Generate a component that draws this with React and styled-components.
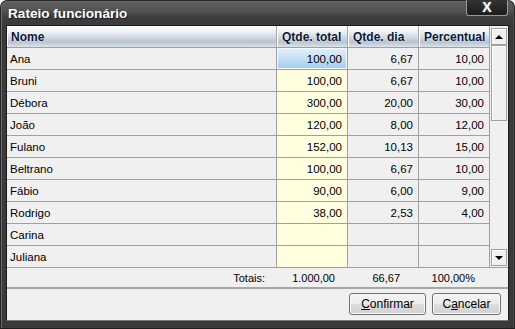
import styled, { createGlobalStyle } from "styled-components";

const GlobalStyle = createGlobalStyle`
  html, body { margin: 0; padding: 0; background: #ffffff; }
  body { font-family: "Liberation Sans", Arial, sans-serif; }
`;

const COLS = "270px 71px 71px 71px";

const rows = [
  { nome: "Ana", total: "100,00", dia: "6,67", perc: "10,00", selected: true },
  { nome: "Bruni", total: "100,00", dia: "6,67", perc: "10,00" },
  { nome: "Débora", total: "300,00", dia: "20,00", perc: "30,00" },
  { nome: "João", total: "120,00", dia: "8,00", perc: "12,00" },
  { nome: "Fulano", total: "152,00", dia: "10,13", perc: "15,00" },
  { nome: "Beltrano", total: "100,00", dia: "6,67", perc: "10,00" },
  { nome: "Fábio", total: "90,00", dia: "6,00", perc: "9,00" },
  { nome: "Rodrigo", total: "38,00", dia: "2,53", perc: "4,00" },
  { nome: "Carina", total: "", dia: "", perc: "" },
  { nome: "Juliana", total: "", dia: "", perc: "" },
];

const Window = styled.div`
  width: 515px;
  height: 329px;
  box-sizing: border-box;
  display: flex;
  flex-direction: column;
  padding: 0 5px 7px 5px;
  border: 1px solid #262626;
  border-bottom-color: #1e1e1e;
  border-radius: 7px 7px 0 0;
  background: linear-gradient(
    #606060 0px,
    #525252 10px,
    #3e3e3e 16px,
    #3a3a3a 24px,
    #3a3a3a 100%
  );
  box-shadow: inset 1px 1px 0 #6a6a6a, inset -1px 0 0 #4a4a4a;
`;

const TitleBar = styled.div`
  height: 24px;
  display: flex;
  align-items: flex-start;
  justify-content: space-between;
`;

const Title = styled.span`
  margin: 5px 0 0 2px;
  font: bold 13.6px/16px "Liberation Sans", Arial, sans-serif;
  color: #ffffff;
  text-shadow: 1px 1px 1px #1a1a1a;
`;

const CloseButton = styled.div`
  width: 40px;
  height: 15px;
  margin: -1px 1px 0 0;
  display: flex;
  align-items: center;
  justify-content: center;
  border: 1px solid #9a9a9a;
  border-top: none;
  border-radius: 0 0 3px 3px;
  background: linear-gradient(#333333, #1c1c1c);
  color: #ffffff;
  font: bold 14px/15px "Liberation Sans", Arial, sans-serif;
  text-shadow: 0 0 2px #888888;
`;

const Panel = styled.div`
  flex: 1;
  display: flex;
  flex-direction: column;
  background: #f0f0f0;
  border: 1px solid #1c1c1c;
  border-bottom-color: #7a7a7a;
`;

const Grid = styled.div`
  display: flex;
`;

const TableCol = styled.div`
  width: 483px;
  display: flex;
  flex-direction: column;
`;

const HeaderRow = styled.div`
  display: grid;
  grid-template-columns: ${COLS};
  height: 22px;
`;

const HeaderCell = styled.div`
  display: flex;
  align-items: center;
  padding-left: ${(p) => (p.first ? "4px" : "5px")};
  border-right: 1px solid #a8a8a8;
  border-bottom: 1px solid #a0a0a0;
  background: linear-gradient(
    #fcfdfd 0%,
    #edf0f3 28%,
    #d3dbe3 52%,
    #b7c3cf 76%,
    #dde3e9 100%
  );
  box-shadow: inset 1px 0 0 #ffffff;
  font: bold 12px "Liberation Sans", Arial, sans-serif;
  color: #0b1838;
  text-shadow: 0 0 2px #ffffff;
`;

const Row = styled.div`
  display: grid;
  grid-template-columns: ${COLS};
  height: 22px;
`;

const Cell = styled.div`
  display: flex;
  align-items: center;
  justify-content: ${(p) => (p.right ? "flex-end" : "flex-start")};
  padding: ${(p) => (p.right ? "0 5px 0 0" : "0 0 0 3px")};
  border-right: 1px solid #a0a0a0;
  border-bottom: 1px solid #a0a0a0;
  background: ${(p) =>
    p.selected
      ? "linear-gradient(#e2f0fb, #c4e0f6 50%, #a2cdef)"
      : p.yellow
      ? "#ffffe0"
      : "#f0f0f0"};
  box-shadow: ${(p) => (p.selected ? "inset 0 0 0 1px #f4faff" : "none")};
  font: 11.5px "Liberation Sans", Arial, sans-serif;
  color: #000000;
`;

const ScrollBar = styled.div`
  width: 18px;
  box-sizing: border-box;
  display: flex;
  flex-direction: column;
  padding: 2px 1px 1px 1px;
  border-bottom: 1px solid #a0a0a0;
  background: #f0f0f0;
`;

const ArrowButton = styled.div`
  height: 17px;
  box-sizing: border-box;
  display: flex;
  align-items: center;
  justify-content: center;
  border: 1px solid #a0a0a0;
  box-shadow: inset 1px 1px 0 #ffffff;
  background: #f0f0f0;
`;

const Triangle = styled.span`
  width: 0;
  height: 0;
  border-left: 4px solid transparent;
  border-right: 4px solid transparent;
  ${(p) =>
    p.down
      ? "border-top: 4px solid #000000;"
      : "border-bottom: 4px solid #000000;"}
`;

const Thumb = styled.div`
  height: 76px;
  box-sizing: border-box;
  border: 1px solid #a0a0a0;
  box-shadow: inset 1px 1px 0 #ffffff;
  background: #f0f0f0;
`;

const Track = styled.div`
  flex: 1;
`;

const TotalsRow = styled.div`
  display: grid;
  grid-template-columns: ${COLS};
  height: 19px;
`;

const TotalCell = styled.div`
  display: flex;
  align-items: center;
  justify-content: flex-end;
  padding-right: ${(p) => p.pad}px;
  font: 11px "Liberation Sans", Arial, sans-serif;
  color: #000000;
`;

const Separator = styled.div`
  height: 2px;
  background: #a6a6a6;
`;

const ButtonRow = styled.div`
  display: flex;
  justify-content: flex-end;
  gap: 6px;
  padding: 4px 7px 0 0;
`;

const Button = styled.button`
  width: ${(p) => p.w}px;
  height: 22px;
  padding: 0;
  border: 1px solid #707070;
  border-radius: 3px;
  background: linear-gradient(#f4f4f4 0%, #ececec 48%, #dedede 52%, #d0d0d0 100%);
  box-shadow: inset 0 0 0 1px #fafafa;
  font: 12px "Liberation Sans", Arial, sans-serif;
  color: #000000;

  u {
    text-decoration: underline;
  }
`;

const App = () => {
  return (
    <>
      <GlobalStyle />
      <Window>
        <TitleBar>
          <Title>Rateio funcionário</Title>
          <CloseButton>X</CloseButton>
        </TitleBar>

        <Panel>
          <Grid>
            <TableCol>
              <HeaderRow>
                <HeaderCell first>Nome</HeaderCell>
                <HeaderCell>Qtde. total</HeaderCell>
                <HeaderCell>Qtde. dia</HeaderCell>
                <HeaderCell>Percentual</HeaderCell>
              </HeaderRow>

              {rows.map((r) => (
                <Row key={r.nome}>
                  <Cell>{r.nome}</Cell>
                  <Cell right yellow selected={r.selected}>{r.total}</Cell>
                  <Cell right>{r.dia}</Cell>
                  <Cell right>{r.perc}</Cell>
                </Row>
              ))}
            </TableCol>

            <ScrollBar>
              <ArrowButton>
                <Triangle />
              </ArrowButton>
              <Thumb />
              <Track />
              <ArrowButton>
                <Triangle down />
              </ArrowButton>
            </ScrollBar>
          </Grid>

          <TotalsRow>
            <TotalCell pad={12}>Totais:</TotalCell>
            <TotalCell pad={13}>1.000,00</TotalCell>
            <TotalCell pad={19}>66,67</TotalCell>
            <TotalCell pad={15}>100,00%</TotalCell>
          </TotalsRow>

          <Separator />

          <ButtonRow>
            <Button w={77}>
              <u>C</u>onfirmar
            </Button>
            <Button w={69}>
              C<u>a</u>ncelar
            </Button>
          </ButtonRow>
        </Panel>
      </Window>
    </>
  );
};

export default App;
